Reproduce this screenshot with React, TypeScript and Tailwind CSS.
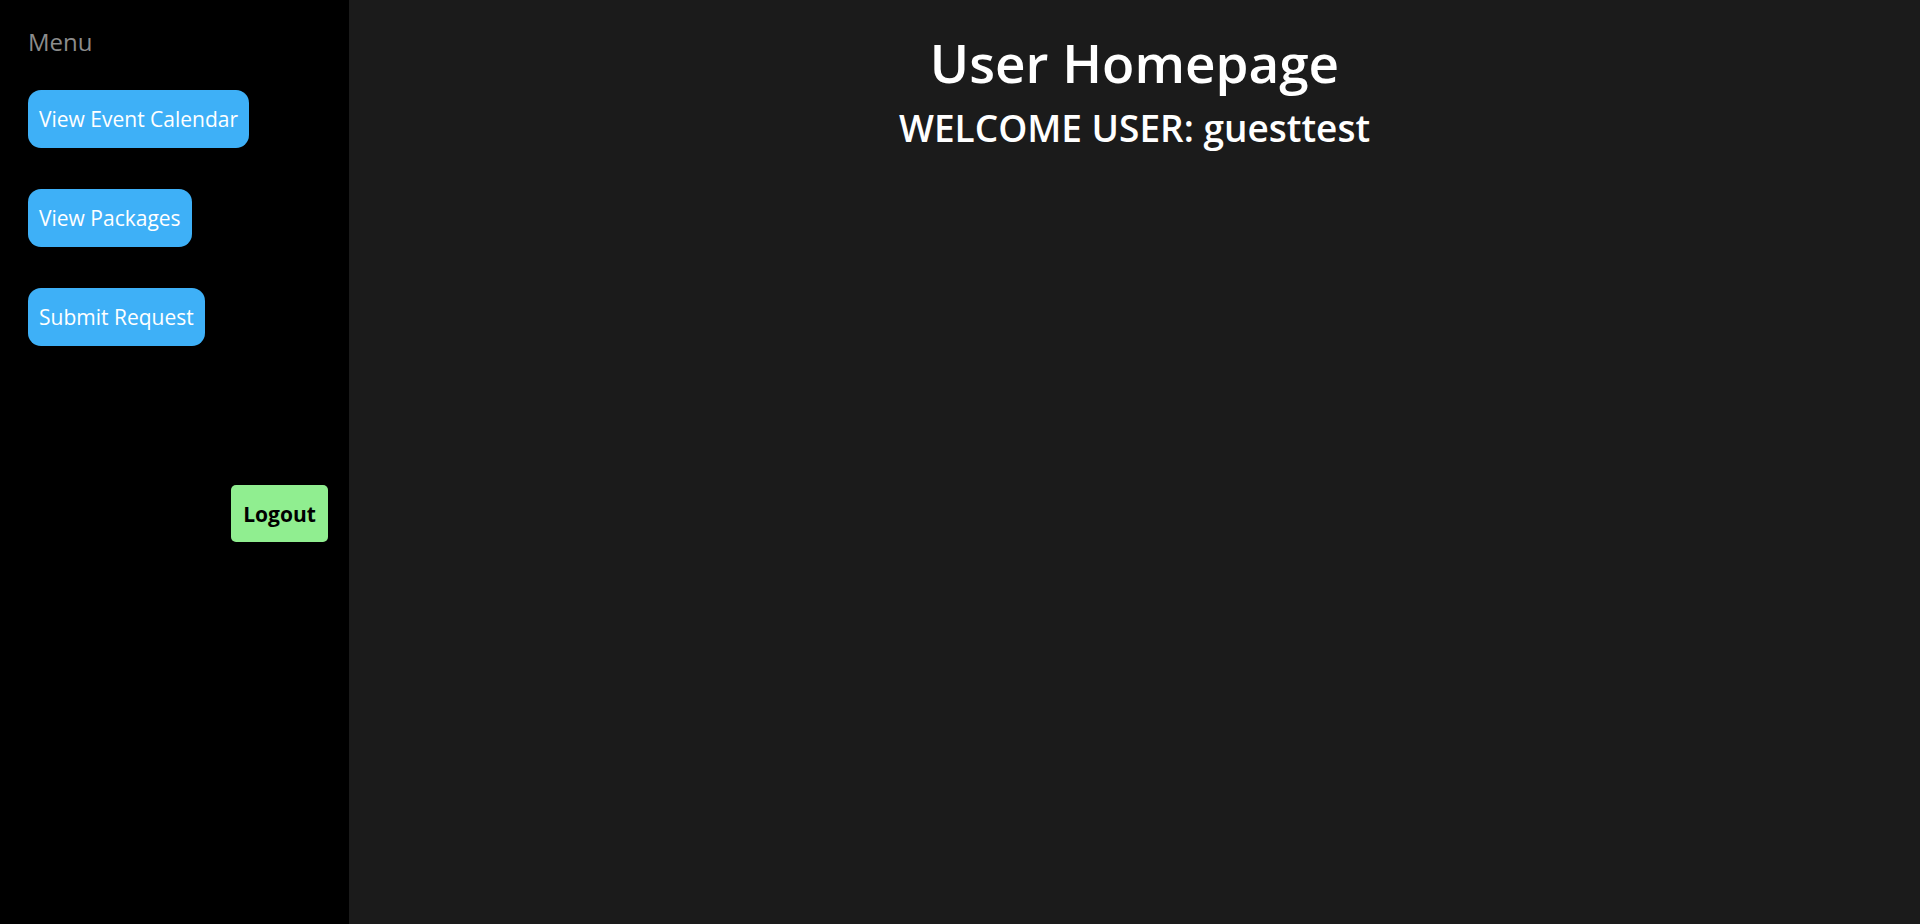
const menuItems = ["View Event Calendar", "View Packages", "Submit Request"];

export default function App() {
  return (
    <div
      className="flex h-[924px] w-full bg-[#1b1b1b]"
      style={{ fontFamily: '"Open Sans", "Noto Sans", sans-serif' }}
    >
      {/* Sidebar */}
      <aside className="flex w-[349px] shrink-0 flex-col bg-black px-[28px] pt-[24px]">
        <p className="text-[24px] leading-[36px] text-[#8c8c8c]">Menu</p>
        <nav className="mt-[30px] flex flex-col items-start gap-[41px]">
          {menuItems.map((label) => (
            <button
              key={label}
              className="flex h-[58px] items-center rounded-[13px] bg-[#3eb0f7] px-[11px] pt-[2px] text-[21px] text-white"
            >
              {label}
            </button>
          ))}
        </nav>
        <button className="mr-[-7px] mt-[139px] flex h-[57px] w-[97px] items-center justify-center self-end rounded-[5px] bg-[#90ee90] pt-[2px] text-[21px] font-bold text-black">
          Logout
        </button>
      </aside>

      {/* Main */}
      <main className="flex flex-1 flex-col items-center pt-[31px] text-white">
        <h1 className="text-[53px] font-semibold leading-[64px]">User Homepage</h1>
        <h2 className="mt-[8px] text-[37px] font-semibold leading-[50px]">WELCOME USER: guesttest</h2>
      </main>
    </div>
  );
}
